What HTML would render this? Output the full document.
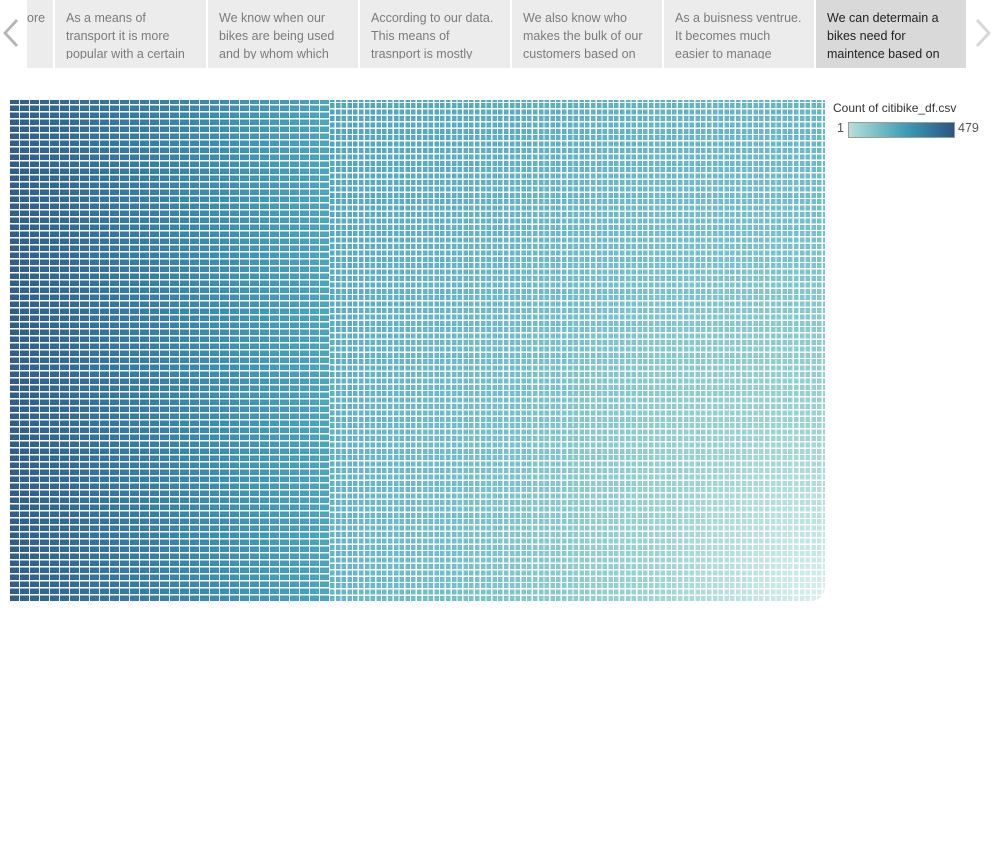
<!DOCTYPE html>
<html><head><style>
body{margin:0;width:999px;height:863px;background:#fff;font-family:"Liberation Sans",sans-serif;position:relative;overflow:hidden}
.tab{position:absolute;top:0;height:68px;background:#ececec;color:#7b7b7b;font-size:12.5px;line-height:18px;box-sizing:border-box;padding:9px 0 0 11px;overflow:hidden;white-space:nowrap}
.tab div{height:50px;overflow:hidden}
.sel{background:#d9d9d9;color:#222}
.tm{position:absolute;}
.grid{position:absolute;inset:0}
</style></head><body>
<svg style="position:absolute;left:1px;top:18px" width="20" height="30"><path d="M16 2 L4 15 L16 28" stroke="#b5b5b5" stroke-width="2.8" fill="none"/></svg>
<svg style="position:absolute;left:974px;top:18px" width="20" height="30"><path d="M3 2 L15 15 L3 28" stroke="#d6d6d6" stroke-width="2.8" fill="none"/></svg>
<div class="tab" style="left:27px;width:26px;padding-left:0"><div>ore</div></div>
<div class="tab" style="left:55px;width:151px"><div>As a means of<br>transport it is more<br>popular with a certain</div></div>
<div class="tab" style="left:208px;width:150px"><div>We know when our<br>bikes are being used<br>and by whom which</div></div>
<div class="tab" style="left:360px;width:150px"><div>According to our data.<br>This means of<br>trasnport is mostly</div></div>
<div class="tab" style="left:512px;width:150px"><div>We also know who<br>makes the bulk of our<br>customers based on</div></div>
<div class="tab" style="left:664px;width:150px"><div>As a buisness ventrue.<br>It becomes much<br>easier to manage</div></div>
<div class="tab sel" style="left:816px;width:150px"><div>We can determain a<br>bikes need for<br>maintence based on</div></div>

<div class="tm" style="left:10px;top:100px;width:320px;height:501px;background:linear-gradient(90deg,#2f5e8a,#33759e 30%,#3a8eb0 65%,#4aa6bd)">
<div class="grid" style="background:repeating-linear-gradient(90deg,transparent 0 9px,#fff 9px 10px),repeating-linear-gradient(0deg,transparent 0 5.5px,#fff 5.5px 7px)"></div></div>
<div class="tm" style="left:330px;top:100px;width:495px;height:501px;border-bottom-right-radius:14px;overflow:hidden;background:radial-gradient(ellipse at 100% 100%,#d8f0ee 0,#9ad3d3 25%,#73c2ca 52%,#55adc1 85%,#4ea6bd 100%)">
<div class="grid" style="background:repeating-linear-gradient(90deg,transparent 0 4.5px,#fff 4.5px 5.8px),repeating-linear-gradient(0deg,transparent 0 5px,#fff 5px 6.4px)"></div></div>

<div style="position:absolute;left:833px;top:101px;font-size:12px;color:#333">Count of citibike_df.csv</div>
<div style="position:absolute;left:837px;top:121px;font-size:12.5px;color:#555">1</div>
<div style="position:absolute;left:848px;top:122px;width:105px;height:14px;border:1px solid #a39c8d;background:linear-gradient(90deg,#b7e0d8,#3c9bb6 55%,#2c5580)"></div>
<div style="position:absolute;left:958px;top:121px;font-size:12.5px;color:#555">479</div>
</body></html>
